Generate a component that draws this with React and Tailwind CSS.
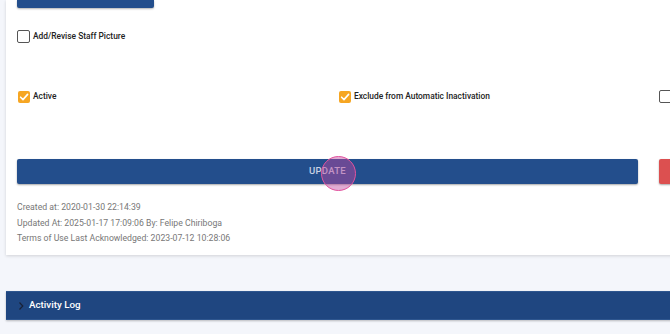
import React from 'react';

function Box({ checked = false }) {
  if (checked) {
    return (
      <span className="w-[12px] h-[12px] rounded-[2px] bg-[#f6a623] flex items-center justify-center shrink-0">
        <svg width="10" height="10" viewBox="0 0 10 10" fill="none">
          <path d="M1.6 5.2 L4 7.6 L8.6 2.4" stroke="white" strokeWidth="1.6" strokeLinecap="round" strokeLinejoin="round" />
        </svg>
      </span>
    );
  }
  return <span className="w-[13px] h-[13px] rounded-[2px] border-[1.5px] border-[#555] bg-white shrink-0" />;
}

function Check({ label, checked }) {
  return (
    <label className="flex items-center gap-[3px] text-[8.4px] leading-[13px] font-medium text-[#222]">
      <Box checked={checked} />
      {label && <span>{label}</span>}
    </label>
  );
}

export default function App() {
  return (
    <div className="w-[670px] h-[334px] overflow-hidden bg-[#f4f6fb] font-['Roboto',sans-serif]">
      <div className="ml-[6px] w-[1000px] h-[255px] bg-white shadow-[0_1px_3px_rgba(0,0,0,0.15)] pl-[11px]">
        {/* tail of the button above */}
        <div className="w-[137px] h-[8px] bg-[#234e8c] rounded-b-[2px] shadow-[0_1px_2px_rgba(0,0,0,0.3)]" />

        <div className="pt-[22px]">
          <Check label="Add/Revise Staff Picture" />
        </div>

        <div className="mt-[47px] flex pl-[1px]">
          <div className="w-[321px]"><Check label="Active" checked /></div>
          <div className="w-[320px]"><Check label="Exclude from Automatic Inactivation" checked /></div>
          <div><Check /></div>
        </div>

        <div className="mt-[56px] flex gap-[21px]">
          <button className="relative w-[621px] h-[25px] bg-[#234e8c] rounded-[2px] shadow-[0_1px_2px_rgba(0,0,0,0.35)] text-[9.5px] font-medium tracking-[0.3px] text-[#c9d2e3]">
            UPDATE
            <span className="absolute left-[304px] top-[-3px] w-[35px] h-[35px] rounded-full border-[1.5px] border-[#e3539e] bg-[rgba(190,70,160,0.45)]" />
          </button>
          <button className="w-[80px] h-[25px] bg-[#dc5050] rounded-[2px] shadow-[0_1px_2px_rgba(0,0,0,0.35)]" />
        </div>

        <div className="mt-[16px] text-[8.7px] leading-[15.5px] text-[#777]">
          <div>Created at: 2020-01-30 22:14:39</div>
          <div>Updated At: 2025-01-17 17:09:06 By: Felipe Chiriboga</div>
          <div>Terms of Use Last Acknowledged: 2023-07-12 10:28:06</div>
        </div>
      </div>

      <div className="mt-[36px] ml-[6px] w-[1000px] h-[29px] bg-[#1f4680] border-y border-[#2e568f] shadow-[0_1px_2px_rgba(0,0,0,0.25)] flex items-center pl-[11px] gap-[4px]">
        <svg width="8" height="10" viewBox="0 0 8 10" fill="none">
          <path d="M2.5 1.5 L5.8 5 L2.5 8.5" stroke="#1a2236" strokeWidth="1.2" />
        </svg>
        <span className="text-[9.8px] font-medium text-white">Activity Log</span>
      </div>
    </div>
  );
}
